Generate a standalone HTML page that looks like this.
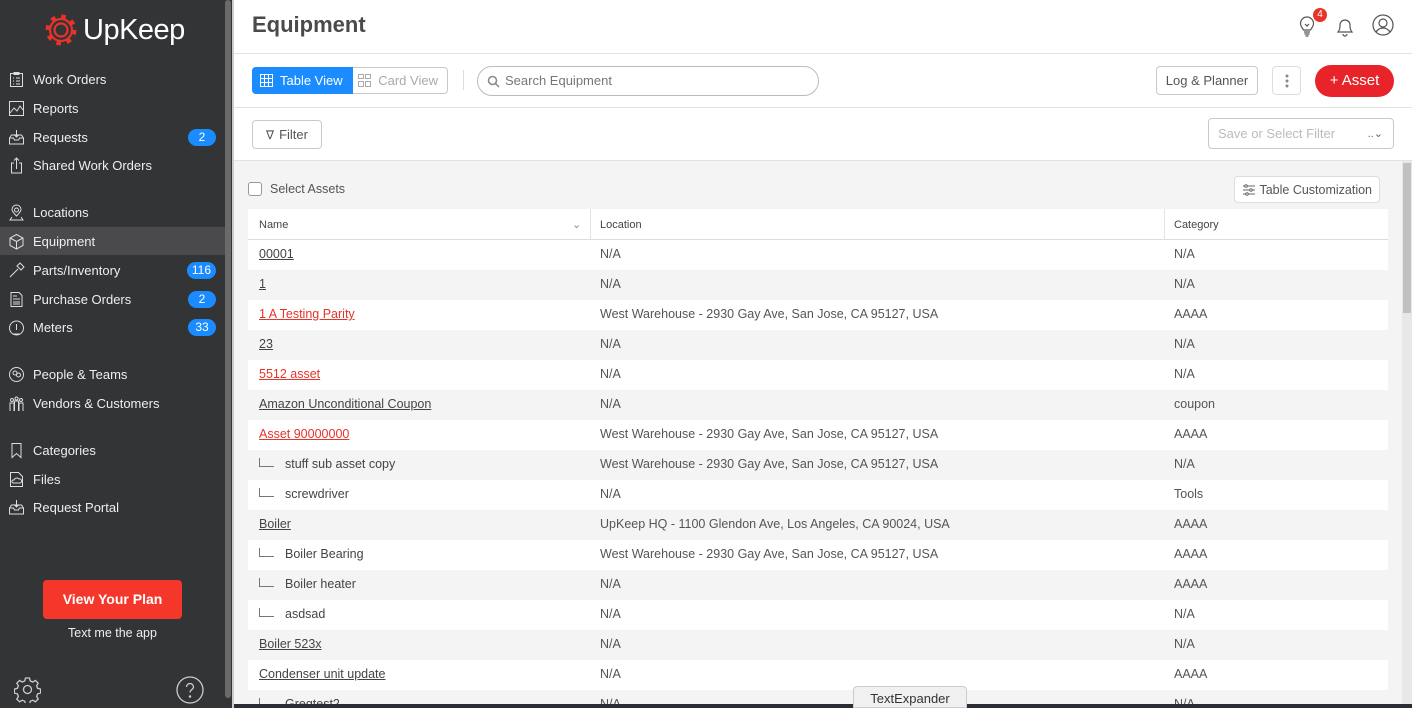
<!DOCTYPE html>
<html><head><meta charset="utf-8"><style>
*{box-sizing:border-box;margin:0;padding:0}
html{width:1412px;height:708px;overflow:hidden}
body{width:1412px;height:708px;overflow:hidden;font-family:"Liberation Sans","DejaVu Sans",sans-serif;background:#fff;position:relative;color:#444}
.sb{position:absolute;left:0;top:0;width:232px;height:708px;background:#333436;color:#e8e8e8}
.sbscroll{position:absolute;left:225px;top:0;width:6px;height:698px;background:#6a6a6b;border-radius:3px}
.logo{position:absolute;left:44px;top:13px;display:flex;align-items:center}
.logo span{font-size:29px;color:#fff;margin-left:5px;letter-spacing:-0.5px}
.nav{position:absolute;left:0;width:225px;height:28px;display:flex;align-items:center;font-size:13px;color:#eee}
.nav svg{position:absolute;left:8px;top:6px}
.nav .t{position:absolute;left:33px}
.nav.act{background:#4a4a4c}
.badge{position:absolute;right:9px;top:6px;height:17px;min-width:28px;padding:0 5px;border-radius:9px;background:#1a8cff;color:#fff;font-size:12px;text-align:center;line-height:17px}
.plan{position:absolute;left:43px;top:580px;width:139px;height:39px;background:#f5372b;border-radius:4px;color:#fff;font-weight:bold;font-size:14px;text-align:center;line-height:39px}
.txt{position:absolute;left:0;width:225px;top:626px;text-align:center;font-size:12.5px;color:#eee}
.main{position:absolute;left:234px;top:0;right:0;height:708px;overflow:hidden}
h1{position:absolute;left:18px;top:12px;font-size:22px;color:#4a4a4a;font-weight:bold}
.hl{position:absolute;left:0;right:0;height:1px;background:#e2e2e2}
.btn{position:absolute;border:1px solid #c9c9c9;border-radius:4px;background:#fff;font-size:13px;color:#555;display:flex;align-items:center;justify-content:center}
.gray{position:absolute;left:0;top:161px;width:1168px;height:547px;background:#f4f4f4}
.tbl{position:absolute;left:14px;top:209px;width:1140px;height:31px;background:#fff}
.row{position:absolute;left:0;width:1140px;height:30px;font-size:12.5px;color:#555;background:#fff}
.row.g{background:#f4f4f4}
.row div{position:absolute;top:7px;white-space:nowrap}
.c1{left:11px}.c2{left:352px}.c3{left:926px}
.u{text-decoration:underline;color:#444}
.r{color:#e8332a;text-decoration:underline}
.sub{left:11px;color:#444;font-size:12.5px}
.sub:before{content:"";display:inline-block;width:14px;height:8px;border-left:1px solid #777;border-bottom:1px solid #777;margin-right:11px;vertical-align:1px}
</style></head><body>
<div class="sb">
<div class="sbscroll"></div>
<div class="logo">
<svg width="34" height="34" viewBox="0 0 34 34"><g fill="none" stroke="#e8332a"><circle cx="17" cy="17" r="6.5" stroke-width="2.2"/><circle cx="17" cy="17" r="11" stroke-width="2.2"/><circle cx="17" cy="17" r="13.5" stroke-width="4" stroke-dasharray="4.6 6"/></g></svg>
<span>UpKeep</span></div>
<div class="nav" style="top:65px"><svg width="17" height="17" viewBox="0 0 17 17" fill="none" stroke="#ddd"><rect x="2.5" y="2.5" width="12" height="13"/><path d="M6 1.5h5v2H6zM5 7h1M8 7h4M5 10h1M8 10h4M5 13h1M8 13h4"/></svg><span class="t">Work Orders</span></div>
<div class="nav" style="top:94px"><svg width="17" height="17" viewBox="0 0 17 17" fill="none" stroke="#ddd"><rect x="1.5" y="1.5" width="14" height="14"/><path d="M2 13l4-5 3 3 3-5 3 4"/></svg><span class="t">Reports</span></div>
<div class="nav" style="top:123px"><svg width="17" height="17" viewBox="0 0 17 17" fill="none" stroke="#ddd"><path d="M1.5 9l2-3h10l2 3v6h-14zM1.5 9h4l1 2h4l1-2h4M8.5 1v7M6 5.5l2.5 2.5 2.5-2.5"/></svg><span class="t">Requests</span><span class="badge">2</span></div>
<div class="nav" style="top:151px"><svg width="17" height="17" viewBox="0 0 17 17" fill="none" stroke="#ddd"><path d="M6 6H3.5v10h10V6H11M8.5 12V1M6 3.5l2.5-2.5 2.5 2.5"/></svg><span class="t">Shared Work Orders</span></div>
<div class="nav" style="top:198px"><svg width="17" height="17" viewBox="0 0 17 17" fill="none" stroke="#ddd"><circle cx="8.5" cy="6" r="2"/><path d="M8.5 12c-3-3-4.5-5-4.5-6.5a4.5 4.5 0 019 0C13 7 11.5 9 8.5 12zM4 13l-2 3h13l-2-3"/></svg><span class="t">Locations</span></div>
<div class="nav act" style="top:227px"><svg width="17" height="17" viewBox="0 0 17 17" fill="none" stroke="#ddd"><path d="M8.5 1.5l6.5 3.5v7.5l-6.5 3.5-6.5-3.5V5zM2 5l6.5 3.5L15 5M8.5 8.5V16"/></svg><span class="t">Equipment</span></div>
<div class="nav" style="top:256px"><svg width="17" height="17" viewBox="0 0 17 17" fill="none" stroke="#ddd"><path d="M2 15l8-8M9 4l4 4 3-3-4-4z"/></svg><span class="t">Parts/Inventory</span><span class="badge">116</span></div>
<div class="nav" style="top:285px"><svg width="17" height="17" viewBox="0 0 17 17" fill="none" stroke="#ddd"><path d="M3 1.5h8l3 3v11H3zM5 5h4M5 8h7M5 11h7M5 13h7"/></svg><span class="t">Purchase Orders</span><span class="badge">2</span></div>
<div class="nav" style="top:313px"><svg width="17" height="17" viewBox="0 0 17 17" fill="none" stroke="#ddd"><circle cx="8.5" cy="9" r="7"/><path d="M8.5 5v6M5 15h7"/></svg><span class="t">Meters</span><span class="badge">33</span></div>
<div class="nav" style="top:360px"><svg width="17" height="17" viewBox="0 0 17 17" fill="none" stroke="#ddd"><circle cx="8.5" cy="8.5" r="7"/><circle cx="7" cy="7" r="2"/><circle cx="10.5" cy="9" r="2"/></svg><span class="t">People &amp; Teams</span></div>
<div class="nav" style="top:389px"><svg width="17" height="17" viewBox="0 0 17 17" fill="none" stroke="#ddd"><circle cx="4" cy="5" r="1.5"/><circle cx="8.5" cy="3.5" r="1.5"/><circle cx="13" cy="5" r="1.5"/><path d="M2 16V8h4v8M6.5 16V6h4v10M11 16V8h4v8"/></svg><span class="t">Vendors &amp; Customers</span></div>
<div class="nav" style="top:436px"><svg width="17" height="17" viewBox="0 0 17 17" fill="none" stroke="#ddd"><path d="M4 1.5h9v14l-4.5-4-4.5 4z"/></svg><span class="t">Categories</span></div>
<div class="nav" style="top:465px"><svg width="17" height="17" viewBox="0 0 17 17" fill="none" stroke="#ddd"><path d="M2.5 1.5h8l4 4v10h-12zM5 12h7a2 2 0 00-1-4 3 3 0 00-5 1 1.5 1.5 0 00-1 3"/></svg><span class="t">Files</span></div>
<div class="nav" style="top:493px"><svg width="17" height="17" viewBox="0 0 17 17" fill="none" stroke="#ddd"><path d="M1.5 9l2-3h10l2 3v6h-14zM1.5 9h4l1 2h4l1-2h4M8.5 1v7M6 5.5l2.5 2.5 2.5-2.5"/></svg><span class="t">Request Portal</span></div>
<div class="plan">View Your Plan</div>
<div class="txt">Text me the app</div>
<svg style="position:absolute;left:14px;top:676px" width="27" height="27" viewBox="0 0 27 27" fill="none" stroke="#ccc" stroke-width="1.3"><circle cx="13.5" cy="13.5" r="4"/><path d="M11.5 2h4l.8 3 2.5 1 2.6-1.6 2.8 2.8-1.6 2.6 1 2.5 3 .8v4l-3 .8-1 2.5 1.6 2.6-2.8 2.8-2.6-1.6-2.5 1-.8 3h-4l-.8-3-2.5-1-2.6 1.6-2.8-2.8 1.6-2.6-1-2.5-3-.8v-4l3-.8 1-2.5-1.6-2.6 2.8-2.8 2.6 1.6 2.5-1z"/></svg>
<svg style="position:absolute;left:176px;top:676px" width="28" height="28" viewBox="0 0 28 28" fill="none" stroke="#ccc" stroke-width="1.3"><circle cx="14" cy="14" r="13"/><path d="M10.5 11a3.5 3.5 0 117 0c0 2.5-3.5 2.5-3.5 5.5"/><circle cx="14" cy="20.5" r=".6" fill="#ccc"/></svg>
</div>
<div style="position:absolute;left:232px;top:0;width:2px;height:708px;background:#ccc"></div>
<div class="main">
<h1>Equipment</h1>
<svg style="position:absolute;left:1064px;top:15px" width="18" height="24" viewBox="0 0 18 24" fill="none" stroke="#555" stroke-width="1.2"><path d="M5.5 15c-1-2-3-3.5-3-6.5a6.5 6.5 0 0113 0c0 3-2 4.5-3 6.5zM6 17h6M6.5 19h5M7.5 21h3M7 9l2 2 2-2"/></svg>
<div style="position:absolute;left:1079px;top:8px;width:14px;height:14px;border-radius:7px;background:#e8332a;color:#fff;font-size:10px;text-align:center;line-height:14px">4</div>
<svg style="position:absolute;left:1101px;top:14px" width="20" height="24" viewBox="0 0 20 24" fill="none" stroke="#555" stroke-width="1.2"><path d="M3 18c1.5-2 2-3 2-7a5 5 0 0110 0c0 4 .5 5 2 7zM8 20a2 2 0 004 0"/></svg>
<svg style="position:absolute;left:1138px;top:14px" width="22" height="22" viewBox="0 0 22 22" fill="none" stroke="#555" stroke-width="1.2"><circle cx="11" cy="11" r="10"/><circle cx="11" cy="9" r="4"/><path d="M4 18c2-3 4-4 7-4s5 1 7 4"/></svg>
<div class="hl" style="top:53px"></div>
<div class="btn" style="left:18px;top:67px;width:196px;height:27px;justify-content:flex-start">
<div style="width:101px;height:27px;margin:-1px 0 -1px -1px;background:#1a8cff;border-radius:4px 0 0 4px;color:#fff;display:flex;align-items:center;padding-left:8px;font-size:13px"><svg width="13" height="13" viewBox="0 0 13 13" fill="none" stroke="#fff"><rect x=".5" y=".5" width="12" height="12"/><path d="M.5 4.5h12M.5 8.5h12M4.5 .5v12M8.5 .5v12"/></svg>&nbsp; Table View</div>
<div style="padding-left:5px;color:#aaa;display:flex;align-items:center"><svg width="13" height="13" viewBox="0 0 13 13" fill="none" stroke="#aaa"><rect x=".5" y=".5" width="5" height="4"/><rect x="7.5" y=".5" width="5" height="4"/><rect x=".5" y="7.5" width="5" height="5"/><rect x="7.5" y="7.5" width="5" height="5"/></svg>&nbsp; Card View</div></div>
<div style="position:absolute;left:229px;top:70px;width:1px;height:20px;background:#ddd"></div>
<div style="position:absolute;left:243px;top:66px;width:342px;height:30px;border:1px solid #bbb;border-radius:15px;font-size:13px;color:#777;padding:6px 0 0 27px"><svg style="position:absolute;left:9px;top:8px" width="13" height="13" viewBox="0 0 13 13" fill="none" stroke="#888" stroke-width="1.5"><circle cx="5.5" cy="5.5" r="4"/><path d="M8.5 8.5l3.5 3.5"/></svg>Search Equipment</div>
<div class="btn" style="left:922px;top:66px;width:102px;height:29px">Log &amp; Planner</div>
<div class="btn" style="left:1038px;top:66px;width:29px;height:29px;border-color:#ddd"><svg width="4" height="14"><circle cx="2" cy="2" r="1.5" fill="#888"/><circle cx="2" cy="7" r="1.5" fill="#888"/><circle cx="2" cy="12" r="1.5" fill="#888"/></svg></div>
<div style="position:absolute;left:1081px;top:65px;width:79px;height:32px;border-radius:16px;background:#e8242a;color:#fff;font-size:15px;text-align:center;line-height:31px">+ Asset</div>
<div class="hl" style="top:107px"></div>
<div class="btn" style="left:18px;top:120px;width:70px;height:29px"><span style="font-size:12px;margin-right:5px">&#8711;</span>Filter</div>
<div class="btn" style="left:974px;top:118px;width:186px;height:31px;justify-content:flex-start;padding-left:9px;color:#bbb">Save or Select Filter<span style="position:absolute;right:10px;color:#666;font-size:11px">..&#8964;</span></div>
<div class="hl" style="top:160px"></div>
<div class="gray"></div>
<div style="position:absolute;left:1168px;top:161px;width:10px;height:547px;background:#e8e8e8"><div style="margin:2px 1px;width:8px;height:150px;background:#c1c1c1"></div></div>
<div style="position:absolute;left:14px;top:182px;width:14px;height:14px;border:1px solid #999;border-radius:3px;background:#fff"></div>
<div style="position:absolute;left:36px;top:182px;font-size:12.5px;color:#555">Select Assets</div>
<div class="btn" style="left:1000px;top:176px;width:146px;height:27px;border-color:#ddd;font-size:12.5px"><svg width="14" height="12" viewBox="0 0 14 12" fill="none" stroke="#666"><path d="M1 2h12M1 6h12M1 10h12"/><circle cx="4" cy="2" r="1.3" fill="#fff"/><circle cx="9" cy="6" r="1.3" fill="#fff"/><circle cx="5" cy="10" r="1.3" fill="#fff"/></svg>&nbsp;Table Customization</div>
<div class="tbl">
<div style="position:absolute;left:0;top:0;width:1140px;height:31px;border-bottom:1px solid #ddd;font-size:11px;color:#444">
<div style="position:absolute;left:11px;top:10px">Name</div><div style="position:absolute;left:324px;top:9px;color:#888">&#8964;</div>
<div style="position:absolute;left:342px;top:0;width:1px;height:31px;background:#e3e3e3"></div>
<div style="position:absolute;left:352px;top:10px">Location</div>
<div style="position:absolute;left:916px;top:0;width:1px;height:31px;background:#e3e3e3"></div>
<div style="position:absolute;left:926px;top:10px">Category</div></div>
</div>
<div style="position:absolute;left:14px;top:240px;">
<div class="row" style="top:0"><div class="c1 u">00001</div><div class="c2">N/A</div><div class="c3">N/A</div></div>
<div class="row g" style="top:30px"><div class="c1 u">1</div><div class="c2">N/A</div><div class="c3">N/A</div></div>
<div class="row" style="top:60px"><div class="c1 r">1 A Testing Parity</div><div class="c2">West Warehouse - 2930 Gay Ave, San Jose, CA 95127, USA</div><div class="c3">AAAA</div></div>
<div class="row g" style="top:90px"><div class="c1 u">23</div><div class="c2">N/A</div><div class="c3">N/A</div></div>
<div class="row" style="top:120px"><div class="c1 r">5512 asset</div><div class="c2">N/A</div><div class="c3">N/A</div></div>
<div class="row g" style="top:150px"><div class="c1 u">Amazon Unconditional Coupon</div><div class="c2">N/A</div><div class="c3">coupon</div></div>
<div class="row" style="top:180px"><div class="c1 r">Asset 90000000</div><div class="c2">West Warehouse - 2930 Gay Ave, San Jose, CA 95127, USA</div><div class="c3">AAAA</div></div>
<div class="row g" style="top:210px"><div class="sub">stuff sub asset copy</div><div class="c2">West Warehouse - 2930 Gay Ave, San Jose, CA 95127, USA</div><div class="c3">N/A</div></div>
<div class="row" style="top:240px"><div class="sub">screwdriver</div><div class="c2">N/A</div><div class="c3">Tools</div></div>
<div class="row g" style="top:270px"><div class="c1 u">Boiler</div><div class="c2">UpKeep HQ - 1100 Glendon Ave, Los Angeles, CA 90024, USA</div><div class="c3">AAAA</div></div>
<div class="row" style="top:300px"><div class="sub">Boiler Bearing</div><div class="c2">West Warehouse - 2930 Gay Ave, San Jose, CA 95127, USA</div><div class="c3">AAAA</div></div>
<div class="row g" style="top:330px"><div class="sub">Boiler heater</div><div class="c2">N/A</div><div class="c3">AAAA</div></div>
<div class="row" style="top:360px"><div class="sub">asdsad</div><div class="c2">N/A</div><div class="c3">N/A</div></div>
<div class="row g" style="top:390px"><div class="c1 u">Boiler 523x</div><div class="c2">N/A</div><div class="c3">N/A</div></div>
<div class="row" style="top:420px"><div class="c1 u">Condenser unit update</div><div class="c2">N/A</div><div class="c3">AAAA</div></div>
<div class="row g" style="top:450px;height:14px;overflow:hidden"><div class="sub">Gregtest2</div><div class="c2">N/A</div><div class="c3">N/A</div></div>
</div>
</div>
<div style="position:absolute;left:234px;top:704px;width:1178px;height:4px;background:#2a2d33"></div>
<div style="position:absolute;left:853px;top:686px;width:114px;height:22px;background:#f0f0f0;border:1px solid #ccc;border-radius:4px 4px 0 0;font-size:13px;color:#333;text-align:center;line-height:24px">TextExpander</div>
</body></html>
